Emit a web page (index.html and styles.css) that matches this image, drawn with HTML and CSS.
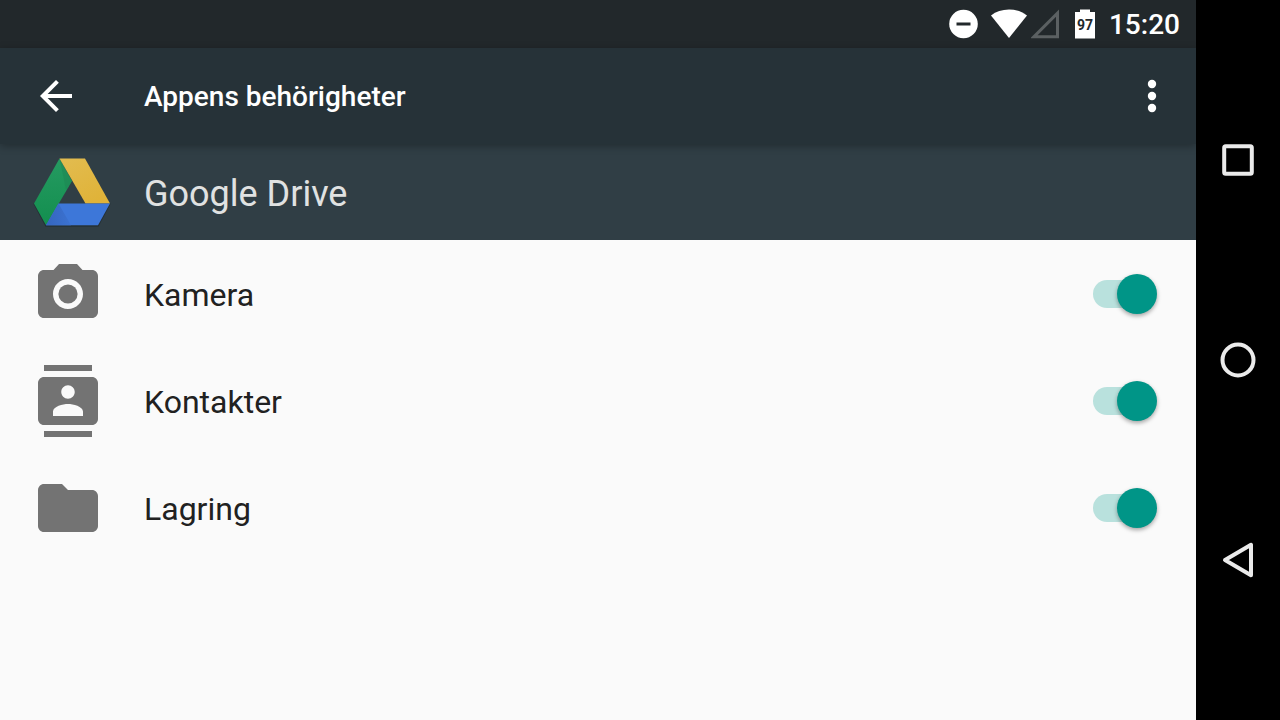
FILE: index.html
```html
<!DOCTYPE html>
<html lang="sv">
<head>
    <meta charset="UTF-8">
    <meta name="viewport" content="width=device-width, initial-scale=1.0">
    <title>Appens behörigheter</title>
    <link rel="stylesheet" href="styles.css">
</head>
<body>
    <div class="screen">
        <div class="status-bar">
            <svg class="dnd-icon" width="30" height="30" viewBox="0 0 30 30">
                <circle cx="14.500" cy="15" r="14.300" fill="#fff"/>
                <rect x="7.500" y="13.500" width="14" height="3" fill="#22282b"/>
            </svg>
            <svg class="wifi-icon" width="36" height="30" viewBox="0 0 36 30">
                <path d="M0 6.4C5 2.6 11 0.5 18 0.5S31 2.6 36 6.4L18 29z" fill="#fff"/>
            </svg>
            <svg class="signal-icon" width="28" height="30" viewBox="0 0 28 30">
                <path d="M3 27.7H26.5V4.200z" fill="none" stroke="#5b6062" stroke-width="3"/>
            </svg>
            <div class="battery">
                <svg width="20" height="30" viewBox="0 0 20 30">
                    <path d="M0 3H5V0.500H15V3H20V29.500H0z" fill="#fff"/>
                </svg>
                <span class="battery-level">97</span>
            </div>
            <time class="clock">15:20</time>
        </div>

        <header class="app-bar">
            <button class="icon-button" aria-label="Tillbaka">
                <svg width="48" height="48" viewBox="0 0 24 24">
                    <path d="M20 11H7.830l5.590-5.590L12 4l-8 8 8 8 1.410-1.410L7.830 13H20v-2z" fill="#fff"/>
                </svg>
            </button>
            <h1 class="title">Appens behörigheter</h1>
            <button class="icon-button" aria-label="Fler alternativ">
                <svg width="48" height="48" viewBox="0 0 24 24" fill="#fff">
                    <circle cx="12" cy="6" r="2.100"/>
                    <circle cx="12" cy="12" r="2.100"/>
                    <circle cx="12" cy="18" r="2.100"/>
                </svg>
            </button>
        </header>

        <div class="app-header">
            <svg class="app-logo" width="80" height="80" viewBox="32 152 80 80">
                <defs>
                    <linearGradient id="green" x1="0" y1="0" x2="0" y2="1">
                        <stop offset="0" stop-color="#259a61"/>
                        <stop offset="1" stop-color="#138f4f"/>
                    </linearGradient>
                    <linearGradient id="yellow" x1="0" y1="0" x2="0.600" y2="1">
                        <stop offset="0" stop-color="#e2bc50"/>
                        <stop offset="1" stop-color="#e0b339"/>
                    </linearGradient>
                    <linearGradient id="fold" x1="0" y1="0" x2="1" y2="0">
                        <stop offset="0" stop-color="#3566bf"/>
                        <stop offset="1" stop-color="#3b72d1"/>
                    </linearGradient>
                </defs>
                <path d="M34 203.500L46 226H98L110 203.500" fill="none" stroke="#1d262b" stroke-width="1.500" opacity="0.600"/>
                <path d="M59.500 158.500L72 181 46 225.200 34 203.500z" fill="url(#green)"/>
                <path d="M59.500 158.500L72 181 66 190z" fill="#1d7f50" opacity="0.400"/>
                <path d="M59.500 158.500H85L110 203.500H85.500z" fill="url(#yellow)"/>
                <path d="M58.500 203.500H110L98 225.200H46z" fill="#3d77d9"/>
                <path d="M58.500 203.500L71 225.200H46z" fill="url(#fold)"/>
            </svg>
            <h2 class="app-name">Google Drive</h2>
        </div>

        <main class="permissions">
            <label class="permission">
                <svg class="permission-icon" width="72" height="72" viewBox="0 0 24 24">
                    <circle cx="12" cy="12" r="3.200"/>
                    <path d="M9 2L7.170 4H4c-1.100 0-2 .9-2 2v12c0 1.100.9 2 2 2h16c1.100 0 2-.9 2-2V6c0-1.100-.9-2-2-2h-3.170L15 2H9zm3 15c-2.760 0-5-2.240-5-5s2.240-5 5-5 5 2.240 5 5-2.240 5-5 5z"/>
                </svg>
                <span class="permission-name">Kamera</span>
                <input class="switch" type="checkbox" role="switch" checked>
            </label>
            <label class="permission">
                <svg class="permission-icon" width="72" height="72" viewBox="0 0 24 24">
                    <path d="M20 0H4v2h16V0zM4 24h16v-2H4v2zM20 4H4c-1.100 0-2 .9-2 2v12c0 1.100.9 2 2 2h16c1.100 0 2-.9 2-2V6c0-1.100-.9-2-2-2zm-8 2.750c1.240 0 2.250 1.010 2.250 2.250s-1.010 2.250-2.250 2.250S9.750 10.240 9.750 9 10.760 6.750 12 6.750zM17 17H7v-1.500c0-1.670 3.330-2.500 5-2.500s5 .83 5 2.500V17z"/>
                </svg>
                <span class="permission-name">Kontakter</span>
                <input class="switch" type="checkbox" role="switch" checked>
            </label>
            <label class="permission">
                <svg class="permission-icon" width="72" height="72" viewBox="0 0 24 24">
                    <path d="M10 4H4c-1.100 0-1.990.9-1.990 2L2 18c0 1.100.9 2 2 2h16c1.100 0 2-.9 2-2V8c0-1.100-.9-2-2-2h-8l-2-2z"/>
                </svg>
                <span class="permission-name">Lagring</span>
                <input class="switch" type="checkbox" role="switch" checked>
            </label>
        </main>
    </div>

    <nav class="nav-bar">
        <button class="nav-button" aria-label="Översikt">
            <svg width="40" height="40" viewBox="0 0 40 40">
                <rect x="6.200" y="6.200" width="27.600" height="27.600" rx="1.500"/>
            </svg>
        </button>
        <button class="nav-button" aria-label="Startsida">
            <svg width="40" height="40" viewBox="0 0 40 40">
                <circle cx="20" cy="20" r="15.500"/>
            </svg>
        </button>
        <button class="nav-button" aria-label="Bakåt">
            <svg width="40" height="40" viewBox="0 0 40 40">
                <path d="M7 20L33 4.800V35.200z"/>
            </svg>
        </button>
    </nav>
</body>
</html>
```

FILE: styles.css
```css
* {
    box-sizing: border-box;
}
body {
    margin: 0;
    min-height: 100vh;
    display: flex;
    font-family: Roboto, sans-serif;
    background: #fafafa;
    color: #212121;
}
button {
    padding: 0;
    border: none;
    background: none;
    cursor: pointer;
}
svg {
    display: block;
}
.screen {
    flex: 1;
    display: flex;
    flex-direction: column;
}

/* status bar */
.status-bar {
    display: flex;
    justify-content: flex-end;
    align-items: center;
    height: 48px;
    padding-right: 16px;
    background: #22282b;
    color: #fff;
}
.wifi-icon {
    margin-left: 12px;
}
.signal-icon {
    margin-left: 4px;
}
.battery {
    position: relative;
    margin-left: 16px;
}
.battery-level {
    position: absolute;
    inset: 0;
    font-size: 14px;
    font-weight: 700;
    line-height: 32px;
    text-align: center;
    color: #22282b;
}
.clock {
    padding-top: 2px;
    margin-left: 14px;
    font-size: 28px;
    font-weight: 500;
    line-height: 32px;
}

/* app bar */
.app-bar {
    display: flex;
    align-items: center;
    height: 96px;
    padding: 0 20px 0 32px;
    background: #263238;
    color: #fff;
    box-shadow: 0 2px 8px rgba(0, 0, 0, 0.3);
    z-index: 1;
}
.title {
    flex: 1;
    margin: 0 0 0 64px;
    padding-top: 2px;
    font-size: 28px;
    font-weight: 500;
    line-height: 32px;
}
.app-header {
    display: flex;
    align-items: center;
    height: 96px;
    padding-left: 32px;
    background: #303e45;
}
.app-name {
    margin: 0 0 0 32px;
    padding-top: 4px;
    font-size: 36px;
    font-weight: 400;
    line-height: 44px;
    color: #e0e2e2;
}

/* permission list */
.permission {
    display: flex;
    align-items: center;
    height: 107px;
    padding: 0 39px 0 32px;
    cursor: pointer;
}
.permission-icon {
    fill: #737373;
}
.permission-name {
    flex: 1;
    margin-left: 40px;
    padding-top: 2px;
    font-size: 32px;
    line-height: 40px;
}
.switch {
    appearance: none;
    position: relative;
    width: 64px;
    height: 40px;
    margin: 0;
    cursor: pointer;
}
.switch::before {
    content: "";
    position: absolute;
    top: 6px;
    left: 0;
    width: 56px;
    height: 28px;
    border-radius: 14px;
    background: #c4c4c4;
}
.switch::after {
    content: "";
    position: absolute;
    top: 0;
    left: 0;
    width: 40px;
    height: 40px;
    border-radius: 50%;
    background: #f1f1f1;
    box-shadow: 0 2px 4px rgba(0, 0, 0, 0.35);
}
.switch:checked::before {
    background: #b9e1dd;
}
.switch:checked::after {
    left: 24px;
    background: #009587;
}

/* navigation bar */
.nav-bar {
    display: flex;
    flex-direction: column;
    justify-content: center;
    align-items: center;
    gap: 160px;
    width: 84px;
    background: #000;
}
.nav-button svg {
    fill: none;
    stroke: #ebebeb;
    stroke-width: 4px;
    stroke-linejoin: round;
}
```
